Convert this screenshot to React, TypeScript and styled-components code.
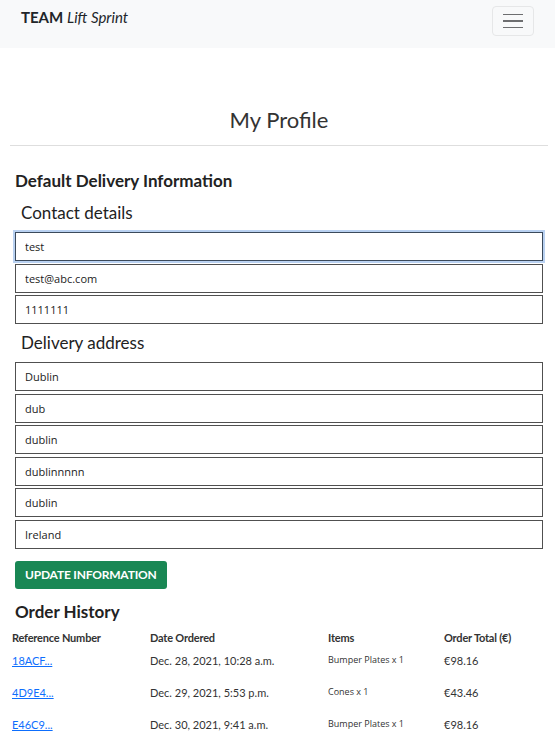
import React from "react";
import styled, { createGlobalStyle } from "styled-components";

const Global = createGlobalStyle`
  html, body { margin: 0; padding: 0; background: #fff; }
  body { font-family: Lato, "Open Sans", sans-serif; color: #212529; }
  * { box-sizing: border-box; }
`;

const Nav = styled.nav`
  height: 48px;
  background: #f8f9fa;
  display: flex;
  align-items: flex-start;
  justify-content: space-between;
  padding: 6px 21px 0 21px;
`;

const Brand = styled.div`
  font-size: 15px;
  line-height: 22px;
  color: #212529;
  b { font-weight: 700; }
  i { font-style: italic; }
`;

const Toggler = styled.button`
  width: 42px;
  height: 30px;
  border: 1px solid #e6e7e8;
  border-radius: 4px;
  background: transparent;
  display: flex;
  flex-direction: column;
  align-items: center;
  justify-content: center;
  gap: 5px;
  padding: 0;
  span {
    display: block;
    width: 20px;
    height: 1.5px;
    background: #6d6e70;
  }
`;

const Main = styled.main`
  padding: 0 7px 0 10px;
`;

const Title = styled.h1`
  margin: 60px 0 0;
  text-align: center;
  font-weight: 400;
  font-size: 22px;
  line-height: 24px;
  color: #333;
`;

const Rule = styled.hr`
  margin: 13px 0 0;
  border: 0;
  border-top: 1px solid #dedede;
`;

const Form = styled.div`
  padding: 0 5px;
`;

const SectionTitle = styled.h2`
  margin: 25px 0 12px;
  font-size: 17px;
  font-weight: 700;
  line-height: 20px;
  color: #222;
`;

const SubTitle = styled.h3`
  margin: 9px 0 9px 6px;
  font-size: 17px;
  font-weight: 400;
  line-height: 20px;
  color: #222;
`;

const Fields = styled.div`
  display: flex;
  flex-direction: column;
  gap: 2.5px;
`;

const Input = styled.input<{ $focus?: boolean }>`
  width: 528px;
  height: 29px;
  border: 1px solid ${(p) => (p.$focus ? "#3b4a5c" : "#505050")};
  border-radius: 0;
  padding: 0 9px;
  font-family: "Open Sans", "Noto Sans", sans-serif;
  font-size: 11px;
  color: #222;
  background: #fff;
  outline: none;
  box-shadow: ${(p) => (p.$focus ? "0 0 0 2px #b9d1f1" : "none")};
`;

const Button = styled.button`
  margin-top: 12px;
  height: 28px;
  padding: 0 10px;
  background: #198754;
  color: #fff;
  border: none;
  border-radius: 3px;
  font-family: Lato, sans-serif;
  font-weight: 700;
  font-size: 12px;
  letter-spacing: -0.2px;
  text-transform: uppercase;
`;

const HistoryTitle = styled.h2`
  margin: 12px 0 0;
  font-size: 17px;
  font-weight: 700;
  line-height: 22px;
  color: #222;
`;

const Table = styled.div`
  margin: 6px 0 0 2px;
  display: grid;
  grid-template-columns: 138px 178px 116px 1fr;
`;

const Th = styled.div`
  font-size: 11px;
  font-weight: 700;
  color: #333;
  height: 18px;
  line-height: 18px;
  letter-spacing: -0.2px;
`;

const Td = styled.div<{ $small?: boolean }>`
  height: 32px;
  padding-top: 6px;
  font-size: ${(p) => (p.$small ? "9px" : "11px")};
  font-family: ${(p) => (p.$small ? '"Open Sans", sans-serif' : "Lato, sans-serif")};
  color: #333;
  line-height: ${(p) => (p.$small ? "13px" : "16px")};
  a { color: #0d6efd; text-decoration: underline; }
`;

const orders = [
  { ref: "18ACF...", date: "Dec. 28, 2021, 10:28 a.m.", items: "Bumper Plates x 1", total: "€98.16" },
  { ref: "4D9E4...", date: "Dec. 29, 2021, 5:53 p.m.", items: "Cones x 1", total: "€43.46" },
  { ref: "E46C9...", date: "Dec. 30, 2021, 9:41 a.m.", items: "Bumper Plates x 1", total: "€98.16" },
];

export default function App() {
  return (
    <>
      <Global />
      <Nav>
        <Brand>
          <b>TEAM</b> <i>Lift Sprint</i>
        </Brand>
        <Toggler aria-label="menu">
          <span />
          <span />
          <span />
        </Toggler>
      </Nav>
      <Main>
        <Title>My Profile</Title>
        <Rule />
        <Form>
          <SectionTitle>Default Delivery Information</SectionTitle>
          <SubTitle>Contact details</SubTitle>
          <Fields>
            <Input $focus defaultValue="test" />
            <Input defaultValue="test@abc.com" />
            <Input defaultValue="1111111" />
          </Fields>
          <SubTitle>Delivery address</SubTitle>
          <Fields>
            <Input defaultValue="Dublin" />
            <Input defaultValue="dub" />
            <Input defaultValue="dublin" />
            <Input defaultValue="dublinnnnn" />
            <Input defaultValue="dublin" />
            <Input defaultValue="Ireland" />
          </Fields>
          <Button>Update Information</Button>
          <HistoryTitle>Order History</HistoryTitle>
        </Form>
        <Table>
          <Th>Reference Number</Th>
          <Th>Date Ordered</Th>
          <Th>Items</Th>
          <Th>Order Total (€)</Th>
          {orders.map((o) => (
            <React.Fragment key={o.ref}>
              <Td>
                <a href="#">{o.ref}</a>
              </Td>
              <Td>{o.date}</Td>
              <Td $small>{o.items}</Td>
              <Td>{o.total}</Td>
            </React.Fragment>
          ))}
        </Table>
      </Main>
    </>
  );
}
